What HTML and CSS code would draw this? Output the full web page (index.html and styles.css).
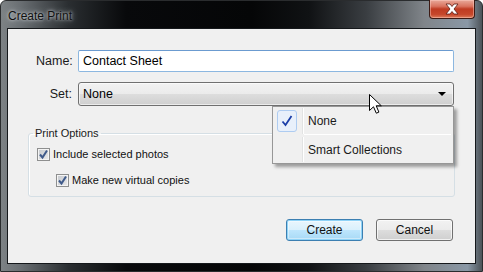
FILE: index.html
```html
<!DOCTYPE html>
<html>
<head>
<meta charset="utf-8">
<link rel="stylesheet" href="styles.css">
</head>
<body>
<div class="window">
  <div class="titlebar">
    <span class="title">Create Print</span>
    <div class="close">
      <svg width="18" height="12" viewBox="0 0 18 12"><path d="M3 1 L7 1 L9 3.5 L11 1 L15 1 L11 6 L15 11 L11 11 L9 8.5 L7 11 L3 11 L7 6 Z" fill="#fff" stroke="#5a1a12" stroke-width="0.8"/></svg>
    </div>
  </div>
  <div class="client">
    <div class="form">
      <span class="lbl">Name:</span>
      <div class="textbox">Contact Sheet</div>
      <span class="lbl">Set:</span>
      <div class="select"><span>None</span><span class="arrow"></span></div>
    </div>
    <fieldset class="group">
      <legend>Print Options</legend>
      <div class="check lvl1"><span class="box"><svg width="11" height="11" viewBox="0 0 11 11"><path d="M2 5.5 L4.5 8.5 L9 1.5" fill="none" stroke="#3f5a8a" stroke-width="2"/></svg></span>Include selected photos</div>
      <div class="check lvl2"><span class="box"><svg width="11" height="11" viewBox="0 0 11 11"><path d="M2 5.5 L4.5 8.5 L9 1.5" fill="none" stroke="#3f5a8a" stroke-width="2"/></svg></span>Make new virtual copies</div>
    </fieldset>
    <div class="buttons">
      <div class="btn default">Create</div>
      <div class="btn">Cancel</div>
    </div>
    <div class="menu">
      <div class="item"><span class="gut"><span class="tick"><svg width="12" height="12" viewBox="0 0 12 12"><path d="M1.5 6.5 L4.5 10 L10.5 1" fill="none" stroke="#1b3ea8" stroke-width="1.8"/></svg></span></span><span class="itxt">None</span></div>
      <div class="sep"></div>
      <div class="item"><span class="gut"></span><span class="itxt">Smart Collections</span></div>
    </div>
    <svg class="cursor" width="14" height="21" viewBox="0 0 14 21"><path d="M0.5 0.5 L0.5 16.5 L4.5 12.8 L7.3 19.2 L9.9 18.1 L7.2 11.8 L12.3 11.8 Z" fill="#fff" stroke="#000" stroke-width="1" stroke-linejoin="miter"/></svg>
  </div>
</div>
</body>
</html>
```

FILE: styles.css
```css
html, body { margin: 0; padding: 0; }
body { width: 483px; height: 272px; overflow: hidden; background: #fff; font-family: "Liberation Sans", Arial, sans-serif; color: #000; }

.window {
  width: 483px; height: 272px; box-sizing: border-box;
  display: flex; flex-direction: column;
  border: 1px solid #2a2c2e; border-radius: 6px 6px 0 0;
  background: linear-gradient(90deg, #7d8285 0%, #6a6f73 4%, #2a2e31 14%, #08090b 26%, #050607 52%, #101214 64%, #3a3e42 76%, #80858a 88%, #8a98a6 97%, #4c5358 100%);
}

.titlebar { height: 27px; display: flex; justify-content: space-between; align-items: flex-start; }
.title {
  font-size: 12px; line-height: 14px; padding: 8px 0 0 7px; color: #111;
  text-shadow: 0 0 6px rgba(210,215,220,0.9), 0 0 3px rgba(220,225,230,0.9);
}
.close {
  width: 46px; height: 19px; margin-right: 7px; margin-top: -1px; box-sizing: border-box;
  border: 1px solid #3c1a14; border-top: none; border-radius: 0 0 4px 4px;
  background: linear-gradient(180deg, #e9a99a 0%, #d9735f 35%, #bf3b22 50%, #c6472b 80%, #dc7b5a 100%);
  box-shadow: inset 0 0 0 1px rgba(255,210,200,0.45);
  display: flex; align-items: center; justify-content: center;
}

.client {
  position: relative; flex: 1; margin: 0 6px 7px 6px;
  background: #f0f0f0; border: 1px solid #15181b;
  display: flex; flex-direction: column;
}

.form {
  display: grid; grid-template-columns: 36px 376px; column-gap: 6px; row-gap: 10px;
  margin: 21px 0 0 28px; align-items: center;
}
.lbl { font-size: 12.5px; text-align: right; color: #1a1a1a; }
.textbox {
  height: 22px; box-sizing: border-box; border: 1px solid #8cb7e0; border-radius: 2px;
  border-top-color: #6b9bd0; background: #fff; font-size: 12.5px; line-height: 20px; padding-left: 4px;
}
.select {
  height: 24px; box-sizing: border-box; border: 1px solid #707070; border-radius: 3px;
  background: linear-gradient(180deg, #f2f2f2 0%, #ebebeb 50%, #dddddd 51%, #cfcfcf 100%);
  box-shadow: inset 0 0 0 1px rgba(255,255,255,0.6);
  font-size: 12.5px; line-height: 22px; padding: 0 7px 0 4px;
  display: flex; justify-content: space-between; align-items: center;
}
.arrow { width: 0; height: 0; border-left: 4px solid transparent; border-right: 4px solid transparent; border-top: 4px solid #000; }

.group {
  margin: 21px 0 0 20px; width: 427px; box-sizing: border-box; min-width: 0;
  border: 1px solid #d5dfe5; border-radius: 3px; padding: 0 0 8px 0;
  box-shadow: inset 1px 1px 0 #fff;
}
.group legend { font-size: 11px; line-height: 13px; padding: 0 2px; margin-left: 4px; color: #1a1a1a; }
.check { display: flex; align-items: center; font-size: 11px; line-height: 15px; color: #111; }
.lvl1 { margin: 7px 0 0 8px; }
.lvl2 { margin: 11px 0 0 27px; }
.box {
  width: 13px; height: 13px; box-sizing: border-box; margin-right: 3px;
  border: 1px solid #8e8f8f; background: linear-gradient(135deg, #c5c9ce 0%, #eaeaeb 100%);
  box-shadow: inset 0 0 0 1px #f4f4f4; display: flex; align-items: center; justify-content: center;
}

.buttons { display: flex; justify-content: flex-end; gap: 13px; margin: 22px 22px 0 0; }
.btn {
  width: 77px; height: 22px; box-sizing: border-box; border: 1px solid #707070; border-radius: 3px;
  background: linear-gradient(180deg, #f2f2f2 0%, #ebebeb 50%, #dddddd 51%, #cfcfcf 100%);
  box-shadow: inset 0 0 0 1px rgba(255,255,255,0.7);
  font-size: 12px; line-height: 20px; text-align: center; color: #111;
}
.btn.default {
  border-color: #3c7fb1;
  background: linear-gradient(180deg, #eaf6fd 0%, #d9f0fc 50%, #bee6fd 51%, #a7d9f5 100%);
  box-shadow: inset 0 0 0 1px #8fd3f7, inset 0 0 0 2px rgba(255,255,255,0.4);
}

.menu {
  position: absolute; left: 264px; top: 77px; width: 182px; height: 58px; box-sizing: border-box;
  background: #f0f0f0; border: 1px solid #979797; padding: 1px;
  box-shadow: 3px 3px 3px rgba(0,0,0,0.35);
  display: flex; flex-direction: column;
}
.item { display: flex; height: 26px; align-items: center; font-size: 12px; color: #1a1a1a; }
.item + .sep + .item { height: 27px; padding-top: 2px; box-sizing: border-box; }
.gut {
  width: 29px; height: 100%; box-sizing: border-box; border-right: 1px solid #e2e3e3;
  box-shadow: 1px 0 0 #fff; display: flex; align-items: center; padding-left: 3px;
}
.tick {
  width: 20px; height: 22px; box-sizing: border-box; border: 1px solid #aeccf1; border-radius: 3px;
  background: #e8f0fb; display: flex; align-items: center; justify-content: center;
}
.itxt { padding-left: 5px; }
.sep { height: 1px; margin: 0 1px 0 30px; background: #e0e0e0; border-bottom: 1px solid #fff; }

.cursor { position: absolute; left: 361px; top: 65px; }
```
